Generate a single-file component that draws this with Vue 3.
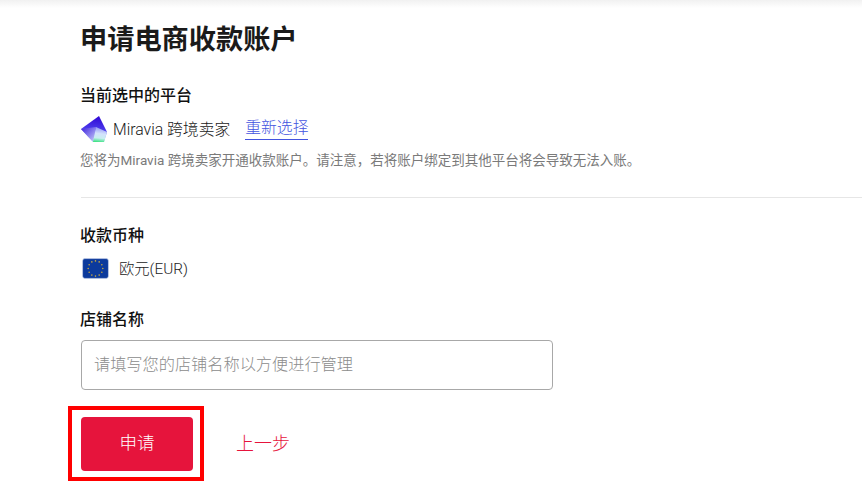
<script setup>
const stars = Array.from({ length: 12 }, (_, i) => {
  const a = (i * Math.PI) / 6
  return { x: 12 + 6.5 * Math.cos(a), y: 9 + 6.5 * Math.sin(a) }
})
</script>

<template>
  <main class="page">
    <div class="topshade"></div>
    <h1 class="title">申请电商收款账户</h1>
    <h2 class="label first">当前选中的平台</h2>
    <div class="platform">
      <svg class="logo" viewBox="0 0 26 28" width="26" height="28">
        <defs>
          <linearGradient id="gem" x1="0.6" y1="0" x2="0.5" y2="1">
            <stop offset="0" stop-color="#2f06d4" />
            <stop offset="0.5" stop-color="#4a38ea" />
            <stop offset="0.78" stop-color="#aab4f8" />
            <stop offset="1" stop-color="#e2eefc" />
          </linearGradient>
          <linearGradient id="gem2" x1="0.6" y1="0" x2="0.5" y2="1">
            <stop offset="0" stop-color="#8f92f5" />
            <stop offset="0.45" stop-color="#d3e2fc" />
            <stop offset="0.75" stop-color="#c8eef0" />
            <stop offset="1" stop-color="#44e288" />
          </linearGradient>
          <linearGradient id="gem3" x1="0" y1="0" x2="1" y2="1">
            <stop offset="0" stop-color="#3a1cdc" />
            <stop offset="1" stop-color="#cdd4fb" />
          </linearGradient>
        </defs>
        <polygon points="18,2 26,18 23,28 12,28 0,15" fill="url(#gem)" />
        <polygon points="0,15 15,13 12,28" fill="url(#gem3)" />
        <polygon points="15,13 26,18 23,28 12,28" fill="url(#gem2)" />
      </svg>
      <span class="platform-name">Miravia 跨境卖家</span>
      <a class="reselect">重新选择</a>
    </div>
    <p class="note">您将为Miravia 跨境卖家开通收款账户。请注意，若将账户绑定到其他平台将会导致无法入账。</p>
    <hr class="divider" />
    <h2 class="label">收款币种</h2>
    <div class="currency">
      <svg class="flag" viewBox="0 0 24 18" width="27" height="21" preserveAspectRatio="none">
        <rect x="0.5" y="0.5" width="23" height="17" rx="2" fill="#0c3a9c" stroke="#c9d4ea" stroke-width="0.6" />
        <circle v-for="(s, i) in stars" :key="i" :cx="s.x" :cy="s.y" r="0.7" fill="#c9a93e" />
      </svg>
      <span class="currency-name">欧元(EUR)</span>
    </div>
    <h2 class="label store">店铺名称</h2>
    <input class="field" type="text" placeholder="请填写您的店铺名称以方便进行管理" />
    <div class="actions">
      <div class="submit-wrap">
        <button class="submit" type="button">申请</button>
        <div class="highlight"></div>
      </div>
      <a class="back">上一步</a>
    </div>
  </main>
</template>

<style scoped>
.page {
  position: relative;
  box-sizing: border-box;
  width: 862px;
  height: 492px;
  padding: 23px 0 0 81px;
  overflow: hidden;
  background: #fff;
  color: #1a1a1a;
  font-family: Roboto, "Noto Sans CJK SC", sans-serif;
}
.topshade {
  position: absolute;
  left: 0;
  right: 0;
  top: 0;
  height: 8px;
  background: linear-gradient(#f1f1f1, #fff);
}
.title {
  margin: 0 0 0 -1px;
  font-size: 27.2px;
  line-height: 34px;
  font-weight: 700;
}
.label {
  margin: 0 0 0 -1px;
  font-size: 16px;
  line-height: 24px;
  font-weight: 500;
  color: #111;
}
.first {
  margin-top: 27px;
}
.platform {
  display: flex;
  align-items: center;
  height: 28px;
  margin-top: 6px;
  font-size: 15.8px;
  font-weight: 300;
}
.logo {
  flex: none;
}
.platform-name {
  margin-left: 6px;
}
.reselect {
  margin-left: 15px;
  color: #4353e0;
  border-bottom: 1px solid #4353e0;
  line-height: 22px;
}
.note {
  margin: 8px 0 0;
  font-size: 13.5px;
  line-height: 20px;
  color: #7a7a7a;
  white-space: nowrap;
  text-indent: -1px;
}
.divider {
  margin: 27px 0 0;
  border: 0;
  border-top: 1px solid #e6e6e6;
}
.divider + .label {
  margin-top: 26px;
}
.currency {
  display: flex;
  align-items: center;
  gap: 10px;
  height: 24px;
  margin-top: 8px;
  font-size: 15.3px;
  font-weight: 300;
  color: #222;
}
.flag {
  flex: none;
  margin-left: 1px;
}
.currency-name {
  margin-bottom: 3px;
}
.store {
  margin-top: 28px;
}
.field {
  display: block;
  box-sizing: border-box;
  width: 472px;
  height: 50px;
  margin-top: 8px;
  padding: 0 12px 2px;
  border: 1px solid #a8a8a8;
  border-radius: 4px;
  outline: none;
  font: 300 16.2px Roboto, "Noto Sans CJK SC", sans-serif;
  color: #222;
}
.field::placeholder {
  color: #8c8c8c;
  opacity: 1;
}
.actions {
  display: flex;
  align-items: center;
  margin-top: 27px;
}
.submit-wrap {
  position: relative;
}
.submit {
  display: block;
  width: 112px;
  height: 54px;
  padding: 0 0 5px;
  border: 0;
  border-radius: 4px;
  background: #e6143c;
  color: #fff;
  font: 300 17.5px Roboto, "Noto Sans CJK SC", sans-serif;
}
.highlight {
  position: absolute;
  left: -13px;
  top: -11px;
  width: 136px;
  height: 75px;
  box-sizing: border-box;
  border: 4px solid #ff0000;
}
.back {
  margin: 0 0 4px 43px;
  font-size: 18px;
  font-weight: 300;
  color: #e6143c;
}
</style>
